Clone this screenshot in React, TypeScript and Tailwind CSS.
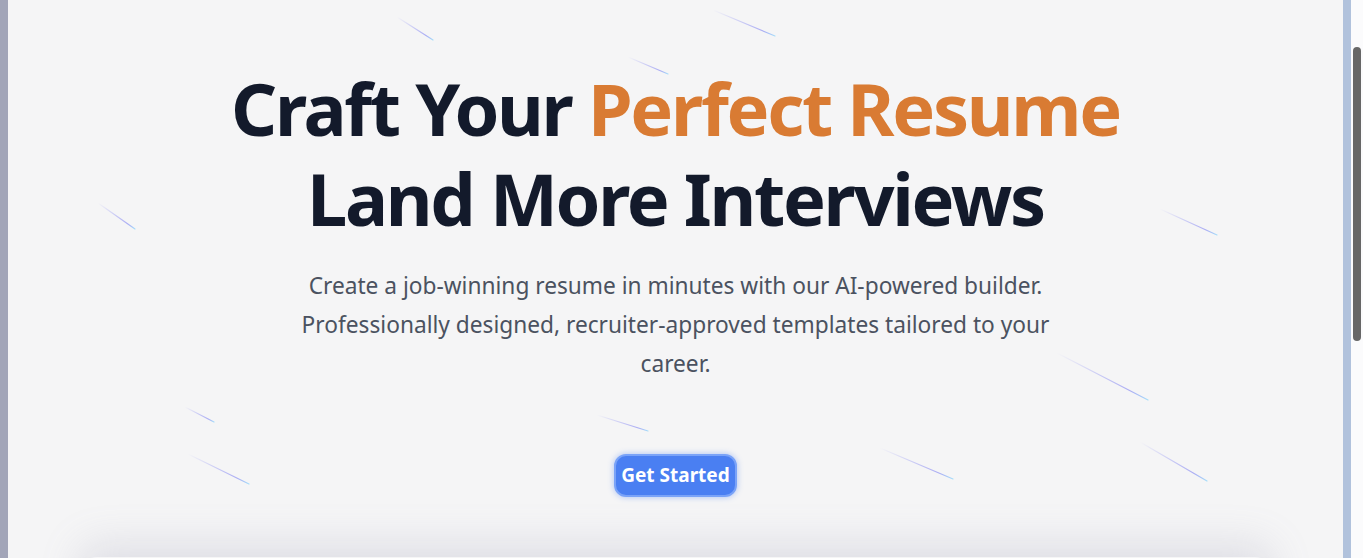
const meteors: [number, number, number, number][] = [
  [397, 17, 433, 40],
  [713, 10, 775, 36],
  [628, 57, 668, 74],
  [98, 203, 135, 229],
  [185, 407, 214, 422],
  [188, 454, 249, 484],
  [1160, 209, 1217, 235],
  [1057, 353, 1148, 400],
  [1140, 442, 1207, 481],
  [597, 415, 648, 431],
  [880, 448, 953, 479],
];

function Meteors() {
  return (
    <svg
      className="pointer-events-none absolute inset-0 h-full w-full"
      width="1363"
      height="558"
      aria-hidden
    >
      <defs>
        {meteors.map(([x1, y1, x2, y2], i) => (
          <linearGradient
            key={i}
            id={`m${i}`}
            gradientUnits="userSpaceOnUse"
            x1={x1}
            y1={y1}
            x2={x2}
            y2={y2}
          >
            <stop offset="0" stopColor="#6366f1" stopOpacity="0" />
            <stop offset="0.8" stopColor="#6366f1" stopOpacity="0.5" />
            <stop offset="1" stopColor="#7dd3fc" stopOpacity="0.65" />
          </linearGradient>
        ))}
      </defs>
      {meteors.map(([x1, y1, x2, y2], i) => (
        <line
          key={i}
          x1={x1}
          y1={y1}
          x2={x2}
          y2={y2}
          stroke={`url(#m${i})`}
          strokeWidth="1.2"
          strokeLinecap="round"
        />
      ))}
    </svg>
  );
}

export default function App() {
  return (
    <div className="relative flex h-[558px] w-full overflow-hidden bg-[#f5f5f6] font-['Noto_Sans',sans-serif]">
      <div className="w-2 shrink-0 bg-[#a2a5b8]" />

      <main className="relative flex min-w-0 flex-1 flex-col items-center">
        <section className="flex flex-col items-center pt-[63px] text-center">
          <h1 className="text-[72px] font-bold leading-[90px] tracking-[-2.3px] text-[#131a2b]">
            Craft Your <span className="text-[#d97b33]">Perfect Resume</span>
            <br />
            Land More Interviews
          </h1>
          <p className="mt-[23px] max-w-3xl text-[22.7px] leading-[39px] text-[#4b5260]">
            Create a job-winning resume in minutes with our AI-powered builder.
            Professionally designed, recruiter-approved templates tailored to your career.
          </p>
          <button className="mt-[71px] h-[43px] rounded-xl border-2 border-[#7aa3f8] bg-[#4a7ff2] px-[5px] text-[19px] font-bold text-white shadow-[0_0_6px_rgba(74,127,242,0.45)]">
            Get Started
          </button>
        </section>

        <div className="mt-[60px] h-[200px] w-[1190px] shrink-0 rounded-2xl bg-[#f5f5f6] shadow-[0_-12px_40px_rgba(140,140,170,0.22)]" />
      </main>

      <div className="w-2 shrink-0 bg-[#b1c2dc]" />
      <div className="flex w-3 shrink-0 justify-center bg-[#fbfbfc] pt-[47px]">
        <div className="h-[294px] w-2 rounded-full bg-[#676767]" />
      </div>

      <Meteors />
    </div>
  );
}
